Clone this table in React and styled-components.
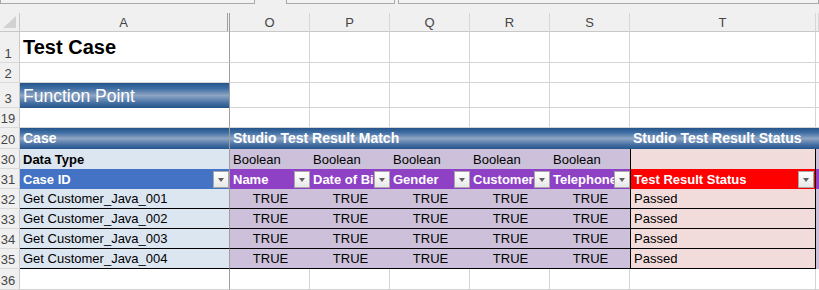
import React from "react";
import styled, { createGlobalStyle } from "styled-components";

const COLS = "20px 210px 80px 80px 80px 80px 80px 186px 1fr";
const GRID = "#d4d4d4";
const FREEZE = "#9e9e9e";
const BAND =
  "linear-gradient(to bottom, #24548a 0%, #3f6ea4 22%, #8ea5c3 50%, #446fa3 80%, #24548a 100%)";

const GlobalStyle = createGlobalStyle`
  *, *::before, *::after { box-sizing: border-box; }
  html, body { margin: 0; padding: 0; background: #fff; overflow: hidden; }
  body { font-family: "Liberation Sans", Arial, sans-serif; }
`;

const Window = styled.div`
  width: 819px;
  height: 290px;
  overflow: hidden;
  background: #fff;
`;

const Strip = styled.div`
  height: 13px;
  background: #f0f0f0;
  display: flex;
  align-items: flex-start;
`;

const StripBox = styled.div`
  width: ${(p) => p.$w};
  margin-left: ${(p) => p.$off || 0}px;
  height: 4px;
  border: 1px solid #a9a9a9;
  border-top: none;
  background: #f3f3f3;
`;

const Row = styled.div`
  display: grid;
  grid-template-columns: ${COLS};
  height: ${(p) => p.$h}px;
`;

const Corner = styled.div`
  background: #f0f0f0;
  border-right: 1px solid #c8c8c8;
  border-bottom: 1px solid #c8c8c8;
  display: flex;
  align-items: flex-end;
  justify-content: flex-end;
  padding: 0 3px 3px 0;
`;

const ColHead = styled.div`
  background: #f0f0f0;
  color: #444;
  font-size: 13px;
  display: flex;
  align-items: center;
  justify-content: center;
  border-right: ${(p) => (p.$freeze ? `3px double ${FREEZE}` : "1px solid #d6d6d6")};
  border-bottom: 1px solid #c8c8c8;
`;

const RowHead = styled.div`
  background: #f0f0f0;
  color: #444;
  font-size: 13px;
  line-height: 15px;
  display: flex;
  align-items: flex-end;
  justify-content: center;
  padding: 0 3px 1px 0;
  border-right: 1px solid #c8c8c8;
  border-bottom: 1px solid #dadada;
`;

const Cell = styled.div`
  position: relative;
  display: flex;
  align-items: flex-end;
  justify-content: ${(p) => (p.$center ? "center" : "flex-start")};
  padding: 0 2px 2px 3px;
  overflow: hidden;
  white-space: nowrap;
  font-size: 13px;
  line-height: 15px;
  color: #000;
  border-right: 1px solid ${(p) => (p.$freeze ? FREEZE : GRID)};
  border-bottom: 1px solid ${GRID};
`;

const Title = styled(Cell)`
  font-size: 20px;
  line-height: 24px;
  font-weight: bold;
  padding-bottom: 3px;
`;

const Band = styled(Cell)`
  grid-column: span ${(p) => p.$span || 1};
  background: ${BAND};
  color: #fff;
  font-size: ${(p) => p.$size || 14}px;
  font-weight: ${(p) => (p.$bold ? "bold" : "normal")};
  line-height: ${(p) => (p.$size || 14) + 3}px;
  border-right: ${(p) => (p.$freeze ? `1px solid ${FREEZE}` : "none")};
  border-bottom: none;
  overflow: visible;
`;

const Fill = styled(Cell)`
  background: ${(p) => p.$bg};
  color: ${(p) => p.$ink || "#000"};
  font-weight: ${(p) => (p.$bold ? "bold" : "normal")};
  border-right: ${(p) =>
    p.$freeze ? `1px solid ${FREEZE}` : p.$box ? "1px solid #000" : "none"};
  border-left: ${(p) => (p.$box ? "1px solid #000" : "none")};
  border-bottom: ${(p) => (p.$rule ? "1px solid #000" : "none")};
`;

const Filter = styled.span`
  position: absolute;
  top: 2px;
  right: ${(p) => p.$right || 0}px;
  width: 16px;
  height: 17px;
  border: 1px solid #a8a8a8;
  background: linear-gradient(to bottom, #ffffff, #e8e8e8);
  z-index: 1;

  &::after {
    content: "";
    position: absolute;
    left: 4px;
    top: 6px;
    border-left: 3.5px solid transparent;
    border-right: 3.5px solid transparent;
    border-top: 4px solid #5f5f5f;
  }
`;

const LIGHT_BLUE = "#dce6f1";
const BLUE = "#4472c4";
const PURPLE = "#8f41c6";
const LAVENDER = "#ccc0da";
const PINK = "#f2dcdb";
const RED = "#ff0000";

const letters = ["O", "P", "Q", "R", "S"];
const fields = ["Name", "Date of Birth", "Gender", "Customer", "Telephone"];
const cases = ["001", "002", "003", "004"];

const Blank = ({ n, h }) => (
  <Row $h={h}>
    <RowHead>{n}</RowHead>
    <Cell $freeze />
    {letters.map((l) => (
      <Cell key={l} />
    ))}
    <Cell />
    <Cell />
  </Row>
);

export default function App() {
  return (
    <Window>
      <GlobalStyle />
      <Strip>
        <StripBox $w="255px" />
        <StripBox $w="109px" $off={31} />
        <StripBox $w="421px" $off={3} />
      </Strip>

      <Row $h={19}>
        <Corner>
          <svg width="13" height="12" viewBox="0 0 13 12">
            <polygon points="13,0 13,12 0,12" fill="#d2d2d2" />
          </svg>
        </Corner>
        <ColHead $freeze>A</ColHead>
        {letters.map((l) => (
          <ColHead key={l}>{l}</ColHead>
        ))}
        <ColHead>T</ColHead>
        <ColHead />
      </Row>

      <Row $h={31}>
        <RowHead>1</RowHead>
        <Title $freeze>Test Case</Title>
        {letters.map((l) => (
          <Cell key={l} />
        ))}
        <Cell />
        <Cell />
      </Row>

      <Blank n={2} h={20} />

      <Row $h={25}>
        <RowHead>3</RowHead>
        <Band $freeze $size={17.5}>
          Function Point
        </Band>
        {letters.map((l) => (
          <Cell key={l} />
        ))}
        <Cell />
        <Cell />
      </Row>

      <Blank n={19} h={20} />

      <Row $h={21}>
        <RowHead>20</RowHead>
        <Band $freeze $bold>
          Case
        </Band>
        <Band $span={5} $bold>
          Studio Test Result Match
        </Band>
        <Band $bold>Studio Test Result Status</Band>
        <Band />
      </Row>

      <Row $h={20}>
        <RowHead>30</RowHead>
        <Fill $bg={LIGHT_BLUE} $freeze $bold>
          Data Type
        </Fill>
        {letters.map((l) => (
          <Fill key={l} $bg={LAVENDER}>
            Boolean
          </Fill>
        ))}
        <Fill $bg={PINK} $box />
        <Fill $bg={LAVENDER} />
      </Row>

      <Row $h={20}>
        <RowHead>31</RowHead>
        <Fill $bg={BLUE} $ink="#fff" $bold $freeze>
          Case ID
          <Filter />
        </Fill>
        {fields.map((f) => (
          <Fill key={f} $bg={PURPLE} $ink="#fff" $bold>
            {f}
            <Filter />
          </Fill>
        ))}
        <Fill $bg={RED} $ink="#fff" $bold $box>
          Test Result Status
          <Filter $right={1} />
        </Fill>
        <Fill $bg={PURPLE} />
      </Row>

      {cases.map((c, i) => (
        <Row key={c} $h={20}>
          <RowHead>{32 + i}</RowHead>
          <Fill $bg={LIGHT_BLUE} $freeze $rule>
            Get Customer_Java_{c}
          </Fill>
          {letters.map((l) => (
            <Fill key={l} $bg={LAVENDER} $rule $center>
              TRUE
            </Fill>
          ))}
          <Fill $bg={PINK} $box $rule>
            Passed
          </Fill>
          <Fill $bg={LAVENDER} />
        </Row>
      ))}

      <Blank n={36} h={21} />
    </Window>
  );
}
